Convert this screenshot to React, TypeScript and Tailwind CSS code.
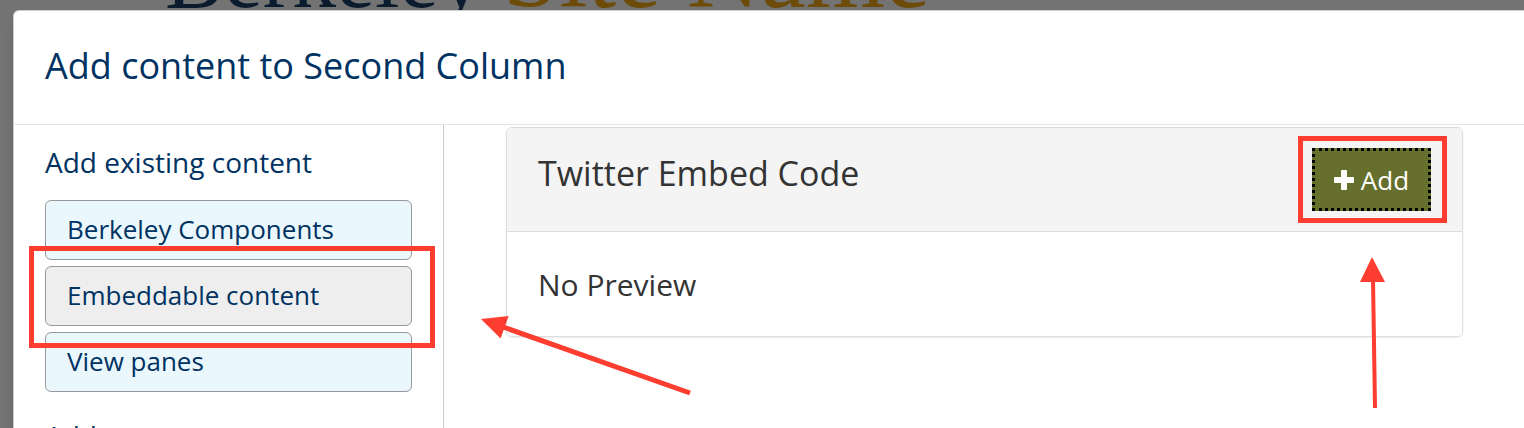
import React from 'react';

const sideItems = [
  { label: 'Berkeley Components', active: false },
  { label: 'Embeddable content', active: true },
  { label: 'View panes', active: false },
];

function PlusIcon() {
  return (
    <svg width="20" height="20" viewBox="0 0 20 20" className="shrink-0">
      <rect x="0" y="7" width="20" height="6" rx="1" fill="#fff" />
      <rect x="7" y="0" width="6" height="20" rx="1" fill="#fff" />
    </svg>
  );
}

function Annotations() {
  return (
    <svg className="absolute inset-0 pointer-events-none" width="1524" height="428" viewBox="0 0 1524 428">
      <rect x="31.5" y="248.5" width="401" height="97" fill="none" stroke="#fc3d2f" strokeWidth="5" />
      <rect x="1300.5" y="138.5" width="144" height="82" fill="none" stroke="#fc3d2f" strokeWidth="5" />
      <line x1="690" y1="393" x2="503" y2="327" stroke="#fc3d2f" strokeWidth="5" />
      <polygon points="481,319 508.6,316 500.6,338.6" fill="#fc3d2f" />
      <line x1="1375" y1="408" x2="1373" y2="279" stroke="#fc3d2f" strokeWidth="4" />
      <polygon points="1372,257 1360,282 1385,282" fill="#fc3d2f" />
    </svg>
  );
}

export default function App() {
  return (
    <div className="relative w-[1524px] h-[428px] overflow-hidden bg-[#737373] font-['Open_Sans',sans-serif]">
      {/* page behind the modal */}
      <div className="h-[10px] overflow-hidden">
        <div className="flex items-baseline pl-[165px] -mt-[78px] font-['Liberation_Serif',serif] leading-none whitespace-nowrap">
          <span className="text-[88px] text-[#0b1c2e]">Berkeley</span>
          <span className="ml-[20px] text-[102px] text-[#6d4c0a]">Site Name</span>
        </div>
      </div>

      <div className="ml-[13px] w-[1560px] bg-white border border-black/20 rounded-tl-[6px] shadow-lg">
        <div className="pl-[31px] pt-[33px] pb-[36px] border-b border-[#e5e5e5]">
          <h1 className="text-[36px] leading-[44px] text-[#003262]">Add content to Second Column</h1>
        </div>

        <div className="flex">
          <div className="w-[430px] shrink-0 border-r border-[#cccccc] pl-[31px] pt-[19px] h-[400px]">
            <h2 className="text-[28px] leading-[36px] text-[#003262] mb-[20px]">Add existing content</h2>
            <div className="flex flex-col gap-[6px]">
              {sideItems.map(item => (
                <div
                  key={item.label}
                  className={`w-[367px] h-[60px] border border-[#999999] rounded-[6px] pl-[21px] pt-[10px] text-[26px] leading-[36px] text-[#003262] ${item.active ? 'bg-[#eeeeee]' : 'bg-[#eaf7fd]'}`}
                >
                  {item.label}
                </div>
              ))}
            </div>
            <h2 className="mt-[26px] text-[28px] leading-[36px] text-[#003262]">Add new content</h2>
          </div>

          <div className="flex-1 pl-[62px] pt-[2px]">
            <div className="w-[957px] border border-[#dddddd] rounded-[6px] shadow-[0_1px_2px_rgba(0,0,0,0.08)] overflow-hidden">
              <div className="flex items-start justify-between bg-[#f4f4f4] border-b border-[#dddddd] px-[31px] py-[20px]">
                <div className="mt-[5px] text-[34px] leading-[40px] text-[#333333]">Twitter Embed Code</div>
                <button className="w-[119px] h-[63px] border-[3px] border-dotted border-black bg-[#666f2b] flex items-center justify-center gap-[7px] text-white text-[26px] leading-none">
                  <PlusIcon />
                  <span>Add</span>
                </button>
              </div>
              <div className="bg-white pl-[31px] pt-[33px] pb-[31px] text-[30px] leading-[40px] text-[#333333]">
                No Preview
              </div>
            </div>
          </div>
        </div>
      </div>

      <Annotations />
    </div>
  );
}
